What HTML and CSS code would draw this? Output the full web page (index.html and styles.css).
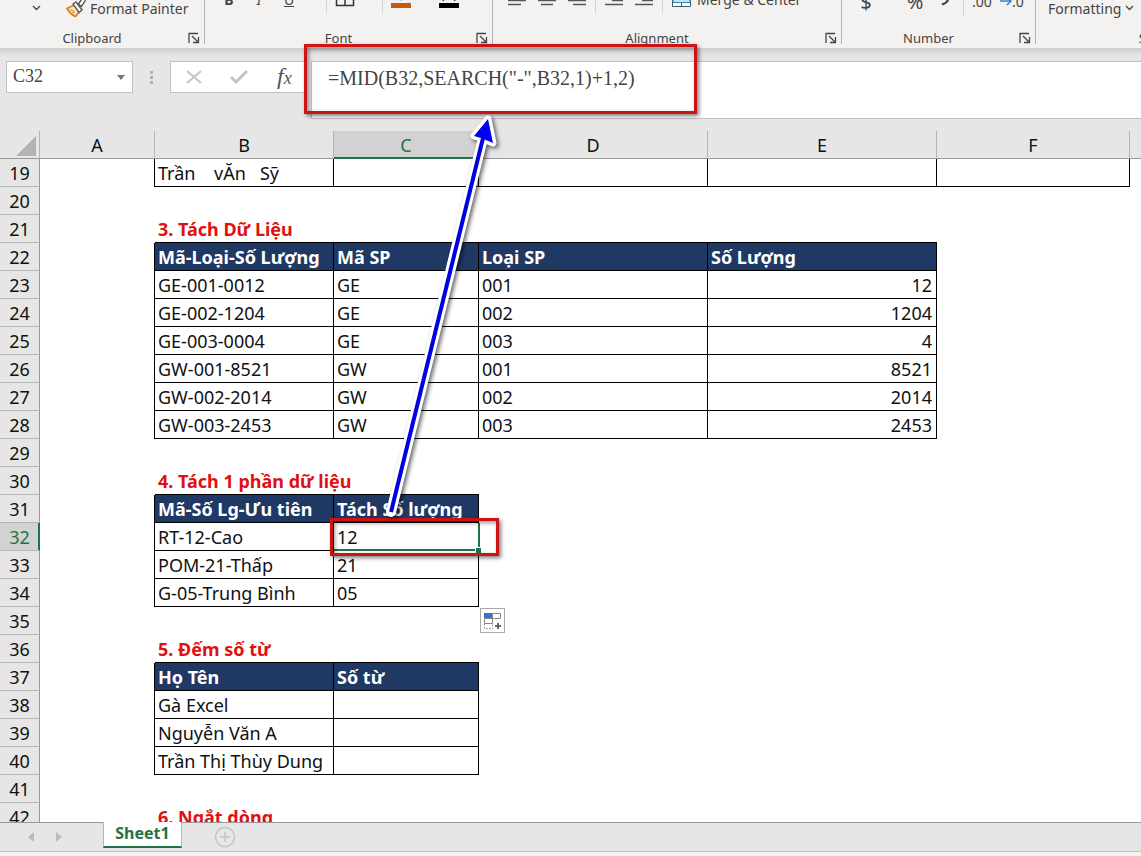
FILE: index.html
```html
<!DOCTYPE html>
<html lang="vi">
<head>
    <meta charset="utf-8">
    <title>Sheet1</title>
    <link rel="stylesheet" href="styles.css">
</head>
<body>
<header class="ribbon">
    <section class="group clipboard">
        <div class="tools">
            <button class="more" aria-label="Paste options"><svg class="chev" width="9" height="6" viewBox="0 0 9 6"><path d="M1 1l3.5 3.5L8 1"/></svg></button>
            <button class="painter">
                <svg width="20" height="20" viewBox="0 0 20 20">
                    <path d="M8 7L1 10.500C3 14 6 17 9.500 18.500L14 13z" fill="#fbe3c8" stroke="#d9822b" stroke-width="1.800"/>
                    <path d="M4 12l4 1M6 15l3-1" stroke="#d9822b" fill="none"/>
                    <path d="M7 6l3-2 6 8-3 2.500z" fill="#fff" stroke="#555" stroke-width="1.400"/>
                    <path d="M12.500 6l4-6 3 2-4 6.500z" fill="#fff" stroke="#555" stroke-width="1.400"/>
                </svg>
                Format Painter
            </button>
        </div>
        <footer><span>Clipboard</span><button class="launch" aria-label="Clipboard settings"><svg width="12" height="12" viewBox="0 0 12 12"><path d="M1 11V1.500h9M4 4l6 6M10.500 5v5.500H5"/></svg></button></footer>
    </section>
    <section class="group font">
        <div class="tools cut">
            <button class="tool"><b>B</b></button>
            <button class="tool"><i>I</i></button>
            <button class="tool"><u>U</u></button>
            <button class="drop" aria-label="Underline options"><svg class="chev" width="7" height="4" viewBox="0 0 9 6"><path d="M1 1l3.5 3.5L8 1"/></svg></button>
            <span class="sep"></span>
            <button class="tool" aria-label="Borders"><svg width="20" height="18" viewBox="0 0 20 18"><path d="M1.500 0v15.500h17V0M10 0v15.500M1.500 8h17" fill="none" stroke="#333" stroke-width="1.500"/></svg></button>
            <button class="drop" aria-label="Border options"><svg class="chev" width="7" height="4" viewBox="0 0 9 6"><path d="M1 1l3.5 3.5L8 1"/></svg></button>
            <span class="sep"></span>
            <button class="tool" aria-label="Fill color"><svg width="20" height="18" viewBox="0 0 20 18"><path d="M6 5l4 6 4-6z" fill="#777"/><path d="M0 13h20v5H0z" fill="#c55a11"/></svg></button>
            <button class="drop" aria-label="Fill options"><svg class="chev" width="7" height="4" viewBox="0 0 9 6"><path d="M1 1l3.5 3.5L8 1"/></svg></button>
            <button class="tool color" aria-label="Font color"><svg width="20" height="18" viewBox="0 0 20 18"><path d="M4 11l5-11h2l5 11" fill="none" stroke="#444" stroke-width="1.500"/><path d="M0 13h20v5H0z" fill="#000"/></svg></button>
            <button class="drop" aria-label="Font color options"><svg class="chev" width="7" height="4" viewBox="0 0 9 6"><path d="M1 1l3.5 3.5L8 1"/></svg></button>
        </div>
        <footer><span>Font</span><button class="launch" aria-label="Font settings"><svg width="12" height="12" viewBox="0 0 12 12"><path d="M1 11V1.500h9M4 4l6 6M10.500 5v5.500H5"/></svg></button></footer>
    </section>
    <section class="group alignment">
        <div class="tools cut">
            <button class="tool" aria-label="Align left"><svg width="18" height="14" viewBox="0 0 18 14"><path d="M0 8.500h18M0 12.500h13" stroke="#555" stroke-width="1.500"/></svg></button>
            <button class="tool" aria-label="Center"><svg width="18" height="14" viewBox="0 0 18 14"><path d="M0 8.500h18M3 12.500h12" stroke="#555" stroke-width="1.500"/></svg></button>
            <button class="tool" aria-label="Align right"><svg width="18" height="14" viewBox="0 0 18 14"><path d="M0 8.500h18M5 12.500h13" stroke="#555" stroke-width="1.500"/></svg></button>
            <span class="sep"></span>
            <button class="tool" aria-label="Decrease indent"><svg width="18" height="14" viewBox="0 0 18 14"><path d="M7 8.500h11M0 12.500h18" stroke="#555" stroke-width="1.500"/></svg></button>
            <button class="tool" aria-label="Increase indent"><svg width="18" height="14" viewBox="0 0 18 14"><path d="M7 8.500h11M0 12.500h18" stroke="#555" stroke-width="1.500"/></svg></button>
            <span class="sep"></span>
            <button class="merge">
                <svg width="19" height="16" viewBox="0 0 19 16"><path d="M.5.5h18v15H.5z" fill="#fff" stroke="#456"/><path d="M1 6.500h17v5H1z" fill="#bfe3f3" stroke="#2d8ab5"/><path d="M9.500 12v3" stroke="#456"/></svg>
                Merge &amp; Center
            </button>
            <button class="drop" aria-label="Merge options"><svg class="chev" width="7" height="4" viewBox="0 0 9 6"><path d="M1 1l3.5 3.5L8 1"/></svg></button>
        </div>
        <footer><span>Alignment</span><button class="launch" aria-label="Alignment settings"><svg width="12" height="12" viewBox="0 0 12 12"><path d="M1 11V1.500h9M4 4l6 6M10.500 5v5.500H5"/></svg></button></footer>
    </section>
    <section class="group number">
        <div class="tools cut">
            <button class="tool big">$</button>
            <button class="drop" aria-label="Currency options"></button>
            <button class="tool big">%</button>
            <button class="tool" aria-label="Comma style"><svg width="10" height="14" viewBox="0 0 10 14"><path d="M8 2c1 4-1 7-6 8.500" fill="none" stroke="#444" stroke-width="2"/></svg></button>
            <span class="sep"></span>
            <button class="tool">.00</button>
            <button class="tool"><svg width="12" height="10" viewBox="0 0 12 10"><path d="M0 5h11M7 1l4 4-4 4" fill="none" stroke="#2b88c8" stroke-width="1.500"/></svg>.0</button>
        </div>
        <footer><span>Number</span><button class="launch" aria-label="Number settings"><svg width="12" height="12" viewBox="0 0 12 12"><path d="M1 11V1.500h9M4 4l6 6M10.500 5v5.500H5"/></svg></button></footer>
    </section>
    <section class="group styles">
        <div class="tools">
            <button class="formatting">Formatting <svg class="chev" width="9" height="6" viewBox="0 0 9 6"><path d="M1 1l3.500 3.500L8 1"/></svg></button>
        </div>
        <footer><span>Styles</span></footer>
    </section>
</header>

<div class="formula-bar">
    <div class="name-box">
        <input type="text" value="C32" aria-label="Name box">
        <button aria-label="Names"><svg width="8" height="5" viewBox="0 0 8 5"><path d="M0 0h8L4 5z" fill="#777"/></svg></button>
    </div>
    <div class="dots"><i></i><i></i><i></i></div>
    <div class="fx-box">
        <button aria-label="Cancel"><svg width="16" height="14" viewBox="0 0 16 14"><path d="M1 1l14 12M15 1L1 13" stroke="#c4c4c4" stroke-width="2"/></svg></button>
        <button aria-label="Enter"><svg width="18" height="14" viewBox="0 0 18 14"><path d="M1 7l5 5L17 1" fill="none" stroke="#c4c4c4" stroke-width="3"/></svg></button>
        <button class="fx" aria-label="Insert function"><i>f<small>x</small></i></button>
    </div>
    <textarea class="formula" aria-label="Formula" spellcheck="false">=MID(B32,SEARCH("-",B32,1)+1,2)</textarea>
</div>

<main class="grid">
    <table class="cells">
        <colgroup><col class="c-head"><col class="c-a"><col class="c-b"><col class="c-c"><col class="c-d"><col class="c-e"><col class="c-f"><col></colgroup>
        <thead>
            <tr><th class="corner"><svg width="20" height="20" viewBox="0 0 20 20"><path d="M20 0v20H0z" fill="#b3b3b3"/></svg></th><th>A</th><th>B</th><th class="on">C</th><th>D</th><th>E</th><th>F</th><th></th></tr>
        </thead>
        <tbody>
            <tr><th>19</th><td class="r"></td><td class="r b pre">Trần    vĂn   Sỹ</td><td class="r b"></td><td class="r b"></td><td class="r b"></td><td class="r b"></td><td></td></tr>
            <tr><th>20</th><td colspan="7"></td></tr>
            <tr><th>21</th><td></td><td class="b title" colspan="4">3. Tách Dữ Liệu</td><td colspan="2"></td></tr>
            <tr><th>22</th><td class="r"></td><td class="r b h">Mã-Loại-Số Lượng</td><td class="r b h">Mã SP</td><td class="r b h">Loại SP</td><td class="r b h">Số Lượng</td><td colspan="2"></td></tr>
            <tr><th>23</th><td class="r"></td><td class="r b">GE-001-0012</td><td class="r b">GE</td><td class="r b">001</td><td class="r b num">12</td><td colspan="2"></td></tr>
            <tr><th>24</th><td class="r"></td><td class="r b">GE-002-1204</td><td class="r b">GE</td><td class="r b">002</td><td class="r b num">1204</td><td colspan="2"></td></tr>
            <tr><th>25</th><td class="r"></td><td class="r b">GE-003-0004</td><td class="r b">GE</td><td class="r b">003</td><td class="r b num">4</td><td colspan="2"></td></tr>
            <tr><th>26</th><td class="r"></td><td class="r b">GW-001-8521</td><td class="r b">GW</td><td class="r b">001</td><td class="r b num">8521</td><td colspan="2"></td></tr>
            <tr><th>27</th><td class="r"></td><td class="r b">GW-002-2014</td><td class="r b">GW</td><td class="r b">002</td><td class="r b num">2014</td><td colspan="2"></td></tr>
            <tr><th>28</th><td class="r"></td><td class="r b">GW-003-2453</td><td class="r b">GW</td><td class="r b">003</td><td class="r b num">2453</td><td colspan="2"></td></tr>
            <tr><th>29</th><td colspan="7"></td></tr>
            <tr><th>30</th><td></td><td class="b title" colspan="2">4. Tách 1 phần dữ liệu</td><td colspan="4"></td></tr>
            <tr><th>31</th><td class="r"></td><td class="r b h">Mã-Số Lg-Ưu tiên</td><td class="r b h">Tách Số lượng</td><td colspan="4"></td></tr>
            <tr><th class="on">32</th><td class="r"></td><td class="r b">RT-12-Cao</td><td class="r b selected">12<span class="handle"></span></td><td colspan="4"></td></tr>
            <tr><th>33</th><td class="r"></td><td class="r b">POM-21-Thấp</td><td class="r b">21</td><td colspan="4"></td></tr>
            <tr><th>34</th><td class="r"></td><td class="r b">G-05-Trung Bình</td><td class="r b">05</td><td colspan="4"></td></tr>
            <tr><th>35</th><td colspan="3"></td><td class="host" colspan="4">
                <button class="autofill" aria-label="Auto fill options"><svg width="18" height="18" viewBox="0 0 18 18"><path d="M1.500 1.500h16v5h-16zM9.500 1.500v5M1.500 6.500v5h8v-5" fill="#fff" stroke="#888"/><path d="M1 1h8v5H1z" fill="#3f6fd1"/><path d="M1.500 12v4.500h8V12" fill="none" stroke="#888" stroke-dasharray="1.500 1.500"/><path d="M12 14h6M15 11v6" stroke="#666" stroke-width="2"/></svg></button>
            </td></tr>
            <tr><th>36</th><td></td><td class="b title" colspan="2">5. Đếm số từ</td><td colspan="4"></td></tr>
            <tr><th>37</th><td class="r"></td><td class="r b h">Họ Tên</td><td class="r b h">Số từ</td><td colspan="4"></td></tr>
            <tr><th>38</th><td class="r"></td><td class="r b">Gà Excel</td><td class="r b"></td><td colspan="4"></td></tr>
            <tr><th>39</th><td class="r"></td><td class="r b">Nguyễn Văn A</td><td class="r b"></td><td colspan="4"></td></tr>
            <tr><th>40</th><td class="r"></td><td class="r b">Trần Thị Thùy Dung</td><td class="r b"></td><td colspan="4"></td></tr>
            <tr><th>41</th><td colspan="7"></td></tr>
            <tr><th>42</th><td></td><td class="title" colspan="2">6. Ngắt dòng</td><td colspan="4"></td></tr>
        </tbody>
    </table>
</main>

<nav class="tabs">
    <button class="arrow" aria-label="Previous sheet"><svg width="6" height="10" viewBox="0 0 6 10"><path d="M6 0v10L0 5z" fill="#bbb"/></svg></button>
    <button class="arrow" aria-label="Next sheet"><svg width="6" height="10" viewBox="0 0 6 10"><path d="M0 0v10l6-5z" fill="#bbb"/></svg></button>
    <button class="sheet">Sheet1</button>
    <button class="add" aria-label="New sheet"><svg width="22" height="22" viewBox="0 0 22 22"><circle cx="11" cy="11" r="9.500"/><path d="M6 11h10M11 6v10"/></svg></button>
</nav>
<div class="status"></div>

<!-- callouts drawn over the sheet -->
<div class="callout formula-mark"></div>
<div class="callout cell-mark"></div>
<svg class="pointer" width="130" height="430" viewBox="0 0 130 430">
    <path d="M19 402L110 32" fill="none" stroke="#fff" stroke-width="10" stroke-linecap="round"/>
    <path d="M116 9L102 26L109 28L121 33z" fill="#fff" stroke="#fff" stroke-width="7" stroke-linejoin="round"/>
    <path d="M19 402L111 28" fill="none" stroke="#0000e0" stroke-width="4"/>
    <path d="M116 9L102 26L109 28L121 33z" fill="#0000f5"/>
</svg>
</body>
</html>
```
FILE: styles.css
```css
* {
    box-sizing: border-box;
}

body {
    margin: 0;
    height: 100vh;
    display: flex;
    flex-direction: column;
    position: relative;
    overflow: hidden;
    background: #e6e6e6;
    color: #111;
    font-family: "Noto Sans", "Open Sans", sans-serif;
    font-size: 18px;
}

button {
    border: none;
    background: none;
    padding: 0;
    margin: 0;
    font: inherit;
    color: inherit;
    display: flex;
    align-items: center;
    justify-content: center;
}

svg {
    display: block;
    flex: none;
}

/* ribbon */
.ribbon {
    flex: none;
    display: flex;
    height: 48px;
    padding-bottom: 4px;
    overflow: hidden;
    background: #f3f2f1;
    color: #444;
    font-size: 14px;
}

.group {
    flex: none;
    display: flex;
    flex-direction: column;
    justify-content: space-between;
    border-right: 1px solid #b5b5b5;
}

.clipboard { width: 205px; }
.font { width: 288px; }
.alignment { width: 349px; }
.number { width: 194px; }
.styles { width: 242px; }

.group footer {
    display: flex;
    align-items: center;
    height: 12px;
    font-size: 13px;
}

.group footer span {
    flex: 1;
    text-align: center;
}

.launch {
    width: 20px;
}

.launch path,
.chev path {
    fill: none;
    stroke: #444;
    stroke-width: 1.3;
}

.tools {
    display: flex;
    align-items: center;
    height: 16px;
}

.cut {
    height: 36px;
    margin-top: -19px;
    padding-left: 9px;
}

.number .cut {
    margin-top: -17px;
}

.more {
    width: 72px;
}

.painter {
    gap: 4px;
    margin-left: -6px;
}

.tool {
    width: 30px;
    height: 18px;
}

.color {
    margin-left: 4px;
}

.big {
    font-size: 20px;
}

.drop {
    width: 14px;
}

.sep {
    width: 1px;
    height: 28px;
    margin: 0 3px;
    background: #d0d0d0;
}

.drop + .sep {
    margin-left: 8px;
}

.number .drop {
    margin-right: 5px;
}

.merge {
    gap: 6px;
    margin: 0 12px 0 6px;
}

.formatting {
    gap: 4px;
    margin-left: 12px;
}

/* formula bar */
.formula-bar {
    flex: none;
    display: flex;
    align-items: flex-start;
    height: 83px;
    padding: 13px 0 12px 6px;
    background: linear-gradient(#cfcfcf, #e6e6e6 8px);
    font-family: "Liberation Serif", serif;
    color: #444;
}

.name-box,
.fx-box {
    display: flex;
    height: 32px;
    border: 1px solid #c0c0c0;
    background: #fff;
}

.name-box {
    width: 127px;
}

.name-box input {
    flex: 1;
    min-width: 0;
    border: none;
    outline: none;
    padding: 0 0 2px 6px;
    background: none;
    font: inherit;
    color: inherit;
}

.name-box button {
    width: 22px;
}

.dots {
    width: 37px;
    height: 32px;
    display: flex;
    flex-direction: column;
    align-items: center;
    justify-content: center;
    gap: 2px;
}

.dots i {
    width: 3px;
    height: 3px;
    background: #b0b0b0;
}

.fx-box {
    width: 137px;
    border-right: none;
}

.fx-box button {
    flex: 1;
}

.fx {
    padding-bottom: 2px;
    font-size: 24px;
    color: #555;
}

.fx small {
    font-size: 18px;
}

.formula {
    flex: 1;
    height: 58px;
    margin: 0 0 0 4px;
    padding: 5px 16px;
    border: 1px solid #c0c0c0;
    border-right: none;
    outline: none;
    resize: none;
    background: #fff;
    color: inherit;
    font: inherit;
    font-size: 20px;
    line-height: 22px;
}

/* sheet */
.grid {
    flex: 1;
    min-height: 0;
    overflow: hidden;
    background: #fff;
}

.cells {
    width: 100%;
    table-layout: fixed;
    border-collapse: separate;
    border-spacing: 0;
}

.c-head { width: 40px; }
.c-a { width: 115px; }
.c-b { width: 179px; }
.c-c { width: 145px; }
.c-d,
.c-e { width: 229px; }
.c-f { width: 193px; }

.cells th,
.cells td {
    height: 28px;
    padding: 2px 3px 0;
    line-height: 25px;
    white-space: nowrap;
    text-align: left;
    vertical-align: top;
}

.cells th {
    padding: 2px 0 0;
    border-right: 1px solid #999;
    border-bottom: 1px solid #b5b5b5;
    background: #e6e6e6;
    font-weight: normal;
    text-align: center;
}

.cells thead th {
    border-bottom-color: #999;
    border-right-color: #b5b5b5;
}

.cells thead th:last-child {
    border-right: none;
}

.cells .corner {
    padding: 5px 0 0 16px;
}

.cells th.on {
    background: #d2d2d2;
    color: #217346;
}

.cells thead th.on {
    box-shadow: inset 0 -1px #217346;
    border-bottom-color: #217346;
}

.cells tbody th.on {
    border-right-color: #217346;
    box-shadow: inset -1px 0 #217346;
}

.cells .r { border-right: 1px solid #000; }
.cells .b { border-bottom: 1px solid #000; }
.cells .num { padding-right: 4px; text-align: right; }
.cells .pre { white-space: pre; }

.cells .title {
    color: #e01010;
    font-weight: bold;
}

.cells .h {
    background: #1f3864;
    color: #fff;
    font-weight: bold;
}

.cells .selected {
    position: relative;
    border-color: #217346;
    box-shadow: inset 0 -1px #217346, 1px 0 #217346;
}

.handle {
    position: absolute;
    right: -4px;
    bottom: -4px;
    width: 7px;
    height: 7px;
    border: 1px solid #fff;
    background: #217346;
}

.host {
    position: relative;
}

.autofill {
    position: absolute;
    left: 1px;
    top: 1px;
    width: 25px;
    height: 25px;
    border: 1px solid #aaa;
    background: #fff;
}

.autofill svg {
    margin-right: 2px;
}

/* sheet tabs */
.tabs {
    flex: none;
    display: flex;
    align-items: flex-start;
    height: 30px;
    padding-left: 17px;
    border-top: 1px solid #999;
    border-bottom: 1px solid #c0c0c0;
}

.arrow {
    width: 28px;
    height: 28px;
}

.sheet {
    width: 79px;
    height: 26px;
    margin: -1px 32px 0 30px;
    padding-bottom: 2px;
    border: 1px solid #b5b5b5;
    border-top: none;
    border-bottom: 2px solid #217346;
    background: #fff;
    color: #217346;
    font-size: 16px;
    font-weight: bold;
}

.add {
    height: 28px;
}

.add svg {
    fill: none;
    stroke: #c4c4c4;
    stroke-width: 1.5;
}

.status {
    flex: none;
    height: 4px;
    background: #f3f2f1;
}

/* callouts */
.callout {
    position: absolute;
    border: 3px solid #cc1414;
    box-shadow: 2px 2px 4px rgba(0, 0, 0, .5), inset 2px 2px 4px rgba(0, 0, 0, .4);
    pointer-events: none;
}

.formula-mark {
    left: 304px;
    top: 44px;
    width: 393px;
    height: 70px;
}

.cell-mark {
    left: 330px;
    top: 518px;
    width: 169px;
    height: 38px;
}

.pointer {
    position: absolute;
    left: 372px;
    top: 110px;
    filter: drop-shadow(2px 2px 2px rgba(0, 0, 0, .6));
    pointer-events: none;
}
```
